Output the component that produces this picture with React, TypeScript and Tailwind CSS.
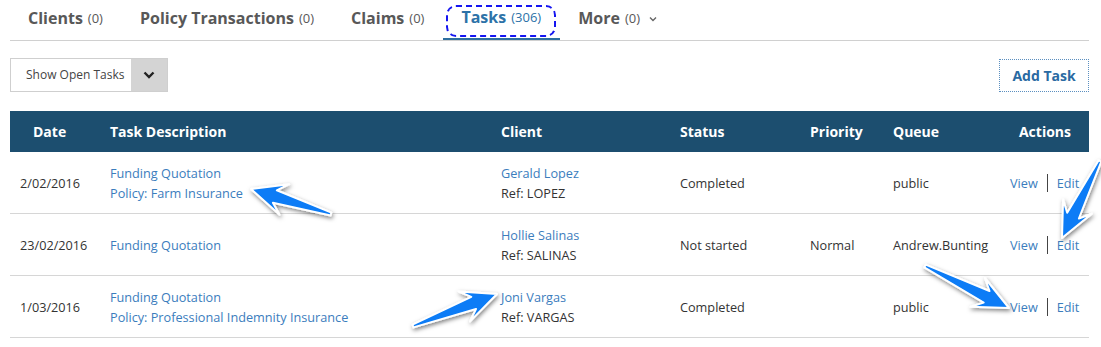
import React from "react";

type Pt = [number, number];

const arrowPoints = (tail: Pt, tip: Pt) => {
  const dx = tip[0] - tail[0];
  const dy = tip[1] - tail[1];
  const len = Math.hypot(dx, dy);
  const d: Pt = [dx / len, dy / len];
  const n: Pt = [-d[1], d[0]];
  const H = 35;
  const W = 16;
  const w = 6.5;
  const p = (base: Pt, along: number, side: number): string =>
    `${(base[0] + d[0] * along + n[0] * side).toFixed(1)},${(base[1] + d[1] * along + n[1] * side).toFixed(1)}`;
  return [
    p(tip, 0, 0),
    p(tip, -H, W),
    p(tip, -H + 10, w),
    p(tail, 0, 1.5),
    p(tail, 0, -1.5),
    p(tip, -H + 10, -w),
    p(tip, -H, -W),
  ].join(" ");
};

const arrows: [Pt, Pt][] = [
  [[331, 214], [251, 189]],
  [[1100, 161], [1062, 238]],
  [[413, 326], [497, 294]],
  [[925, 266], [1009, 308]],
];

const rows = [
  {
    date: "2/02/2016",
    desc: ["Funding Quotation", "Policy: Farm Insurance"],
    client: "Gerald Lopez",
    ref: "Ref: LOPEZ",
    status: "Completed",
    priority: "",
    queue: "public",
  },
  {
    date: "23/02/2016",
    desc: ["Funding Quotation"],
    client: "Hollie Salinas",
    ref: "Ref: SALINAS",
    status: "Not started",
    priority: "Normal",
    queue: "Andrew.Bunting",
  },
  {
    date: "1/03/2016",
    desc: ["Funding Quotation", "Policy: Professional Indemnity Insurance"],
    client: "Joni Vargas",
    ref: "Ref: VARGAS",
    status: "Completed",
    priority: "",
    queue: "public",
  },
];

const cols = "grid grid-cols-[90px_391px_179px_130px_83px_117px_89px]";

const Tab = ({ label, count, active, more }: { label: string; count: string; active?: boolean; more?: boolean }) => (
  <div
    className={`relative flex h-[40px] items-center pb-[4px] pl-[18px] pr-[19px] ${
      active ? "border-b-2 border-[#2d6f9f] text-[#2d72a8]" : "text-[#585858]"
    }`}
  >
    <span className="text-[16px] font-bold">{label}</span>
    <span className="ml-[5px] mt-[2px] text-[13px]">{count}</span>
    {more && (
      <svg className="ml-[9px] mt-[2px]" width="8" height="6" viewBox="0 0 8 6">
        <path d="M1 1.5 L4 4.5 L7 1.5" fill="none" stroke="#666" strokeWidth="1.4" />
      </svg>
    )}
    {active && (
      <div className="absolute left-[3px] right-[4px] top-[5px] h-[32px] rounded-[10px] border-2 border-dashed border-[#1515f0]" />
    )}
  </div>
);

export default function App() {
  return (
    <div className="relative h-[347px] w-[1101px] overflow-hidden bg-white pl-[10px] pr-[12px] font-['Open_Sans',sans-serif] text-[#333]">
      <div className="flex border-b border-[#d0d0d0]">
        <Tab label="Clients" count="(0)" />
        <Tab label="Policy Transactions" count="(0)" />
        <Tab label="Claims" count="(0)" />
        <Tab label="Tasks" count="(306)" active />
        <Tab label="More" count="(0)" more />
      </div>

      <div className="mt-[17px] flex items-start justify-between">
        <div className="flex h-[34px] w-[158px] border border-[#cfcfcf]">
          <div className="flex flex-1 items-center pl-[15px] text-[12px] text-[#444]">Show Open Tasks</div>
          <div className="flex w-[36px] items-center justify-center bg-[#d4d4d4]">
            <svg width="12" height="8" viewBox="0 0 12 8">
              <path d="M1.5 1.5 L6 6 L10.5 1.5" fill="none" stroke="#222" strokeWidth="2.4" />
            </svg>
          </div>
        </div>
        <div className="mt-[1px] flex h-[33px] w-[90px] items-center justify-center border border-dotted border-[#5b8fc0] text-[14px] font-bold text-[#2a6aa2]">
          Add Task
        </div>
      </div>

      <div className="mt-[19px]">
        <div className={`${cols} h-[41px] items-center bg-[#1c4e6f] text-[14px] font-bold text-white`}>
          <div className="pl-[23px]">Date</div>
          <div className="pl-[10px]">Task Description</div>
          <div className="pl-[10px]">Client</div>
          <div className="pl-[10px]">Status</div>
          <div className="pl-[10px]">Priority</div>
          <div className="pl-[10px]">Queue</div>
          <div className="pr-[18px] text-right">Actions</div>
        </div>
        {rows.map((r) => (
          <div key={r.date} className={`${cols} h-[62px] items-center border-b border-[#d6d6d6] text-[12.7px] leading-[20px]`}>
            <div className="pl-[10px]">{r.date}</div>
            <div className="flex flex-col pl-[10px] text-[#3b7dbd]">
              {r.desc.map((d) => (
                <span key={d}>{d}</span>
              ))}
            </div>
            <div className="flex flex-col pl-[10px]">
              <span className="text-[#3b7dbd]">{r.client}</span>
              <span>{r.ref}</span>
            </div>
            <div className="pl-[10px]">{r.status}</div>
            <div className="pl-[10px]">{r.priority}</div>
            <div className="pl-[10px]">{r.queue}</div>
            <div className="flex items-center pl-[10px] text-[#3b7dbd]">
              <span>View</span>
              <span className="mx-[9px] h-[18px] w-px bg-[#444]" />
              <span>Edit</span>
            </div>
          </div>
        ))}
      </div>

      <svg className="pointer-events-none absolute left-0 top-0" width="1101" height="347">
        <defs>
          <filter id="sh" x="-30%" y="-30%" width="160%" height="160%">
            <feDropShadow dx="1" dy="2" stdDeviation="2.2" floodColor="#000" floodOpacity="0.5" />
          </filter>
        </defs>
        {arrows.map(([tail, tip], i) => (
          <polygon
            key={i}
            points={arrowPoints(tail, tip)}
            fill="#0a7cf6"
            stroke="#fff"
            strokeWidth="2"
            strokeLinejoin="round"
            filter="url(#sh)"
          />
        ))}
      </svg>
    </div>
  );
}
